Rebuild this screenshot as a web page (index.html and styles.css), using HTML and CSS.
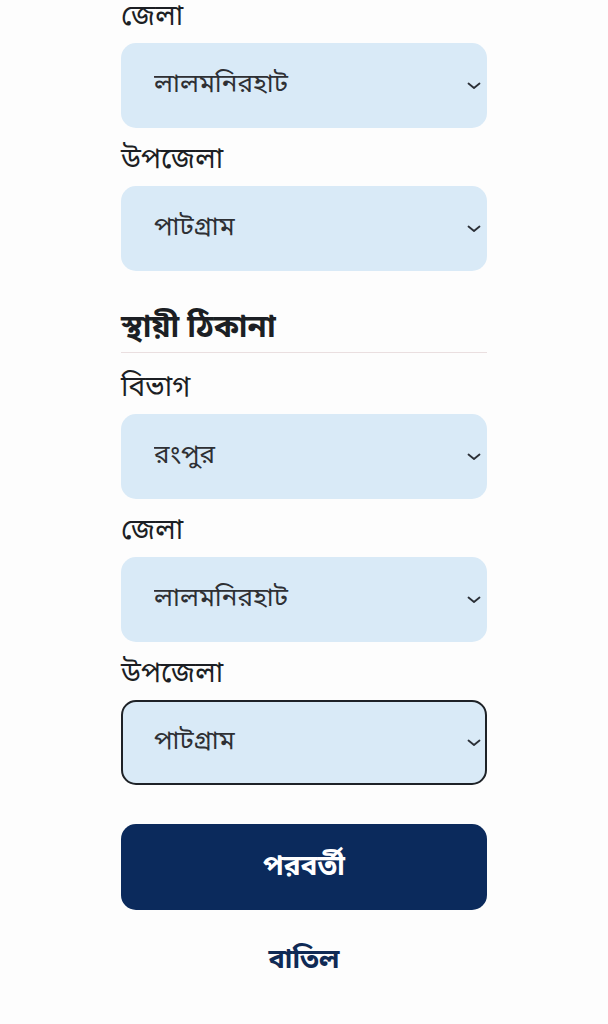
FILE: index.html
```html
<!DOCTYPE html>
<html lang="bn">
<head>
    <meta charset="UTF-8">
    <meta name="viewport" content="width=device-width, initial-scale=1.0">
    <title>ঠিকানা</title>
    <link rel="stylesheet" href="styles.css">
</head>
<body>
    <div class="container">
        <form id="address-form">
            <div class="field">
                <label for="present_district">জেলা</label>
                <div class="select-wrap">
                    <select id="present_district" name="present_district">
                        <option>লালমনিরহাট</option>
                    </select>
                    <svg class="chevron" viewBox="0 0 14 8" width="14" height="8"><path d="M1.5 1.5 L7 6 L12.5 1.5" fill="none" stroke="#2b2f36" stroke-width="1.8" stroke-linecap="round" stroke-linejoin="round"/></svg>
                </div>
            </div>
            <div class="field">
                <label for="present_upazila">উপজেলা</label>
                <div class="select-wrap">
                    <select id="present_upazila" name="present_upazila">
                        <option>পাটগ্রাম</option>
                    </select>
                    <svg class="chevron" viewBox="0 0 14 8" width="14" height="8"><path d="M1.5 1.5 L7 6 L12.5 1.5" fill="none" stroke="#2b2f36" stroke-width="1.8" stroke-linecap="round" stroke-linejoin="round"/></svg>
                </div>
            </div>

            <h2 class="section-title">স্থায়ী ঠিকানা</h2>

            <div class="field">
                <label for="perm_division">বিভাগ</label>
                <div class="select-wrap">
                    <select id="perm_division" name="perm_division">
                        <option>রংপুর</option>
                    </select>
                    <svg class="chevron" viewBox="0 0 14 8" width="14" height="8"><path d="M1.5 1.5 L7 6 L12.5 1.5" fill="none" stroke="#2b2f36" stroke-width="1.8" stroke-linecap="round" stroke-linejoin="round"/></svg>
                </div>
            </div>
            <div class="field">
                <label for="perm_district">জেলা</label>
                <div class="select-wrap">
                    <select id="perm_district" name="perm_district">
                        <option>লালমনিরহাট</option>
                    </select>
                    <svg class="chevron" viewBox="0 0 14 8" width="14" height="8"><path d="M1.5 1.5 L7 6 L12.5 1.5" fill="none" stroke="#2b2f36" stroke-width="1.8" stroke-linecap="round" stroke-linejoin="round"/></svg>
                </div>
            </div>
            <div class="field">
                <label for="perm_upazila">উপজেলা</label>
                <div class="select-wrap">
                    <select id="perm_upazila" name="perm_upazila" class="focused">
                        <option>পাটগ্রাম</option>
                    </select>
                    <svg class="chevron" viewBox="0 0 14 8" width="14" height="8"><path d="M1.5 1.5 L7 6 L12.5 1.5" fill="none" stroke="#2b2f36" stroke-width="1.8" stroke-linecap="round" stroke-linejoin="round"/></svg>
                </div>
            </div>

            <button type="submit" class="btn-next">পরবর্তী</button>
            <button type="button" class="btn-cancel">বাতিল</button>
        </form>
    </div>
</body>
</html>
```

FILE: styles.css
```css
body {
    font-family: "Noto Sans Bengali", "Noto Sans", sans-serif;
    margin: 0;
    background-color: #fdfdfd;
    color: #1c1f24;
}
.container {
    width: 366px;
    margin: 0 auto;
}
form {
    display: flex;
    flex-direction: column;
}
.field {
    display: flex;
    flex-direction: column;
    gap: 7px;
    margin-bottom: 15px;
}
label {
    font-size: 28px;
    line-height: 36px;
    color: #1c1f24;
}
.select-wrap {
    position: relative;
}
select {
    width: 100%;
    height: 85px;
    padding: 0 40px 0 31px;
    border: 2px solid transparent;
    border-radius: 15px;
    background-color: #d9eaf7;
    font-family: inherit;
    font-size: 26px;
    color: #2e3034;
    appearance: none;
    -webkit-appearance: none;
    outline: none;
}
select.focused {
    border-color: #1e2227;
}
.chevron {
    position: absolute;
    right: 6px;
    top: 39px;
    pointer-events: none;
}
.section-title {
    font-size: 31px;
    font-weight: bold;
    margin: 23px 0 18px;
    padding-bottom: 1px;
    border-bottom: 1px solid #eadfe0;
    line-height: 42px;
}
.btn-next {
    margin-top: 24px;
    height: 86px;
    border: none;
    border-radius: 15px;
    background-color: #0b2a5c;
    color: #ffffff;
    font-family: inherit;
    font-size: 28px;
    font-weight: bold;
    cursor: pointer;
}
.btn-cancel {
    margin-top: 32px;
    background: none;
    border: none;
    color: #0f2a55;
    font-family: inherit;
    font-size: 27px;
    font-weight: bold;
    cursor: pointer;
}
```
